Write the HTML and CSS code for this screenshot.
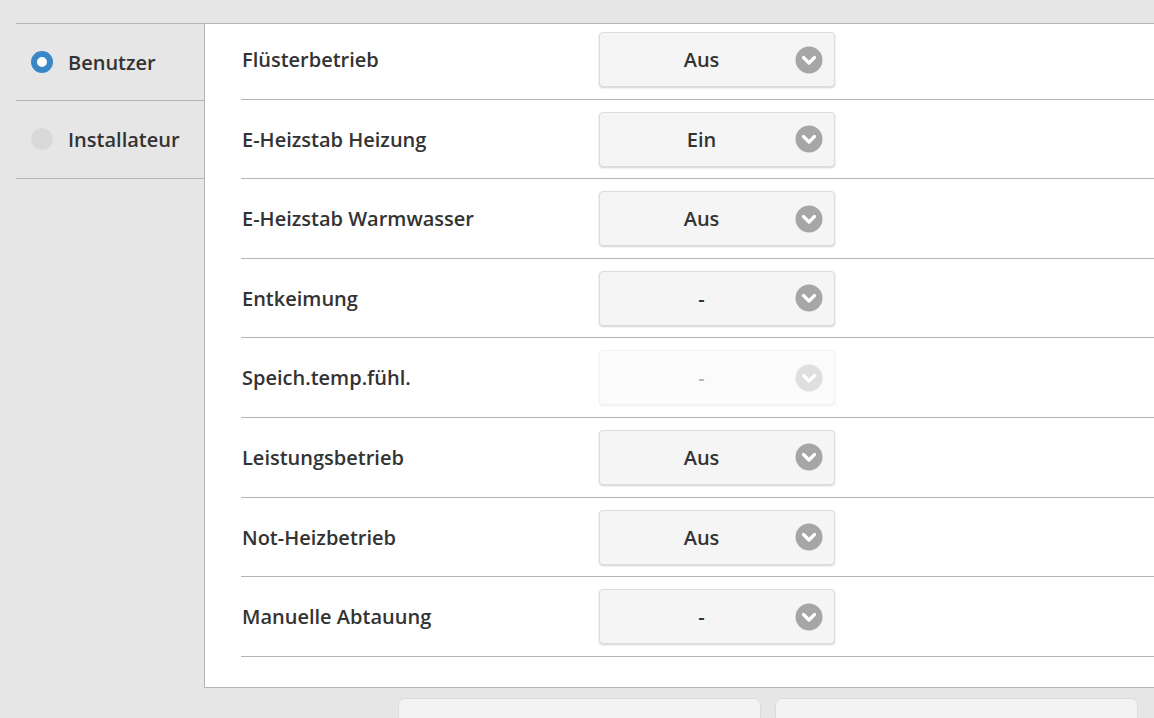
FILE: index.html
```html
<!DOCTYPE html>
<html lang="de">
<head>
<meta charset="utf-8">
<link rel="stylesheet" href="styles.css">
</head>
<body>
<div class="page">
  <div class="layout">
    <aside class="sidebar">
      <div class="side-item">
        <span class="radio radio-on"></span>
        <span class="side-label">Benutzer</span>
      </div>
      <div class="side-item">
        <span class="radio"></span>
        <span class="side-label">Installateur</span>
      </div>
    </aside>
    <main class="panel">
      <div class="row first">
        <div class="label">Flüsterbetrieb</div>
        <div class="select"><span class="value">Aus</span><span class="chev"><svg viewBox="0 0 28 28" width="28" height="28"><circle cx="14" cy="14" r="13.5" fill="#a6a6a6"/><path d="M8.5 11.5 L14 17 L19.5 11.5" fill="none" stroke="#fff" stroke-width="3.2" stroke-linecap="round" stroke-linejoin="round"/></svg></span></div>
      </div>
      <div class="row">
        <div class="label">E-Heizstab Heizung</div>
        <div class="select"><span class="value">Ein</span><span class="chev"><svg viewBox="0 0 28 28" width="28" height="28"><circle cx="14" cy="14" r="13.5" fill="#a6a6a6"/><path d="M8.5 11.5 L14 17 L19.5 11.5" fill="none" stroke="#fff" stroke-width="3.2" stroke-linecap="round" stroke-linejoin="round"/></svg></span></div>
      </div>
      <div class="row">
        <div class="label">E-Heizstab Warmwasser</div>
        <div class="select"><span class="value">Aus</span><span class="chev"><svg viewBox="0 0 28 28" width="28" height="28"><circle cx="14" cy="14" r="13.5" fill="#a6a6a6"/><path d="M8.5 11.5 L14 17 L19.5 11.5" fill="none" stroke="#fff" stroke-width="3.2" stroke-linecap="round" stroke-linejoin="round"/></svg></span></div>
      </div>
      <div class="row">
        <div class="label">Entkeimung</div>
        <div class="select"><span class="value">-</span><span class="chev"><svg viewBox="0 0 28 28" width="28" height="28"><circle cx="14" cy="14" r="13.5" fill="#a6a6a6"/><path d="M8.5 11.5 L14 17 L19.5 11.5" fill="none" stroke="#fff" stroke-width="3.2" stroke-linecap="round" stroke-linejoin="round"/></svg></span></div>
      </div>
      <div class="row">
        <div class="label">Speich.temp.fühl.</div>
        <div class="select disabled"><span class="value">-</span><span class="chev"><svg viewBox="0 0 28 28" width="28" height="28"><circle cx="14" cy="14" r="13.5" fill="#a6a6a6"/><path d="M8.5 11.5 L14 17 L19.5 11.5" fill="none" stroke="#fff" stroke-width="3.2" stroke-linecap="round" stroke-linejoin="round"/></svg></span></div>
      </div>
      <div class="row">
        <div class="label">Leistungsbetrieb</div>
        <div class="select"><span class="value">Aus</span><span class="chev"><svg viewBox="0 0 28 28" width="28" height="28"><circle cx="14" cy="14" r="13.5" fill="#a6a6a6"/><path d="M8.5 11.5 L14 17 L19.5 11.5" fill="none" stroke="#fff" stroke-width="3.2" stroke-linecap="round" stroke-linejoin="round"/></svg></span></div>
      </div>
      <div class="row">
        <div class="label">Not-Heizbetrieb</div>
        <div class="select"><span class="value">Aus</span><span class="chev"><svg viewBox="0 0 28 28" width="28" height="28"><circle cx="14" cy="14" r="13.5" fill="#a6a6a6"/><path d="M8.5 11.5 L14 17 L19.5 11.5" fill="none" stroke="#fff" stroke-width="3.2" stroke-linecap="round" stroke-linejoin="round"/></svg></span></div>
      </div>
      <div class="row">
        <div class="label">Manuelle Abtauung</div>
        <div class="select"><span class="value">-</span><span class="chev"><svg viewBox="0 0 28 28" width="28" height="28"><circle cx="14" cy="14" r="13.5" fill="#a6a6a6"/><path d="M8.5 11.5 L14 17 L19.5 11.5" fill="none" stroke="#fff" stroke-width="3.2" stroke-linecap="round" stroke-linejoin="round"/></svg></span></div>
      </div>
    </main>
  </div>
  <div class="buttons">
    <div class="btn"></div>
    <div class="btn"></div>
  </div>
</div>
</body>
</html>
```

FILE: styles.css
```css
html, body {
  margin: 0;
  padding: 0;
  background: #e6e6e6;
  overflow: hidden;
  font-family: "Open Sans", "Liberation Sans", sans-serif;
  color: #333;
}

.page {
  width: 1154px;
  height: 718px;
  overflow: hidden;
  padding-top: 23px;
  box-sizing: border-box;
}

.layout {
  display: flex;
  margin-left: 16px;
  width: 1160px;
  border-top: 1px solid #b5b5b5;
}

.sidebar {
  width: 188px;
  flex: none;
}

.side-item {
  height: 77.3px;
  border-bottom: 1px solid #b5b5b5;
  display: flex;
  align-items: center;
  padding-left: 14px;
  box-sizing: border-box;
}

.radio {
  width: 22px;
  height: 22px;
  border-radius: 50%;
  background: #d9d9d9;
  box-sizing: border-box;
  flex: none;
  margin-left: 1px;
}

.radio-on {
  background: #fff;
  border: 6px solid #3a87c8;
}

.side-label {
  margin-left: 15px;
  font-size: 20px;
  font-weight: 600;
}

.panel {
  flex: 1;
  background: #fff;
  border-left: 1px solid #b5b5b5;
  border-bottom: 1px solid #b5b5b5;
  padding-left: 36px;
  padding-bottom: 30px;
}

.row {
  display: flex;
  align-items: center;
  padding: 12px 0 11.6px;
  border-bottom: 1px solid #b5b5b5;
}

.row.first {
  padding-top: 8px;
}

.label {
  width: 358px;
  flex: none;
  font-size: 20px;
  font-weight: 600;
  padding-left: 1px;
  box-sizing: border-box;
}

.select {
  width: 236px;
  height: 55px;
  box-sizing: border-box;
  background: #f5f5f5;
  border: 1px solid #dcdcdc;
  border-radius: 4px;
  box-shadow: 0 1px 2px rgba(0, 0, 0, 0.18);
  display: flex;
  align-items: center;
  padding-right: 11px;
}

.value {
  flex: 1;
  text-align: center;
  font-size: 20px;
  font-weight: 600;
  padding-left: 8px;
  color: #333;
}

.chev {
  display: flex;
  width: 28px;
  height: 28px;
}

.select.disabled {
  opacity: 0.35;
}

.buttons {
  display: flex;
  gap: 14px;
  margin-left: 398px;
  margin-top: 10px;
}

.btn {
  width: 363px;
  height: 40px;
  box-sizing: border-box;
  background: #f3f3f3;
  border: 1px solid #dcdcdc;
  border-radius: 7px;
}
```
